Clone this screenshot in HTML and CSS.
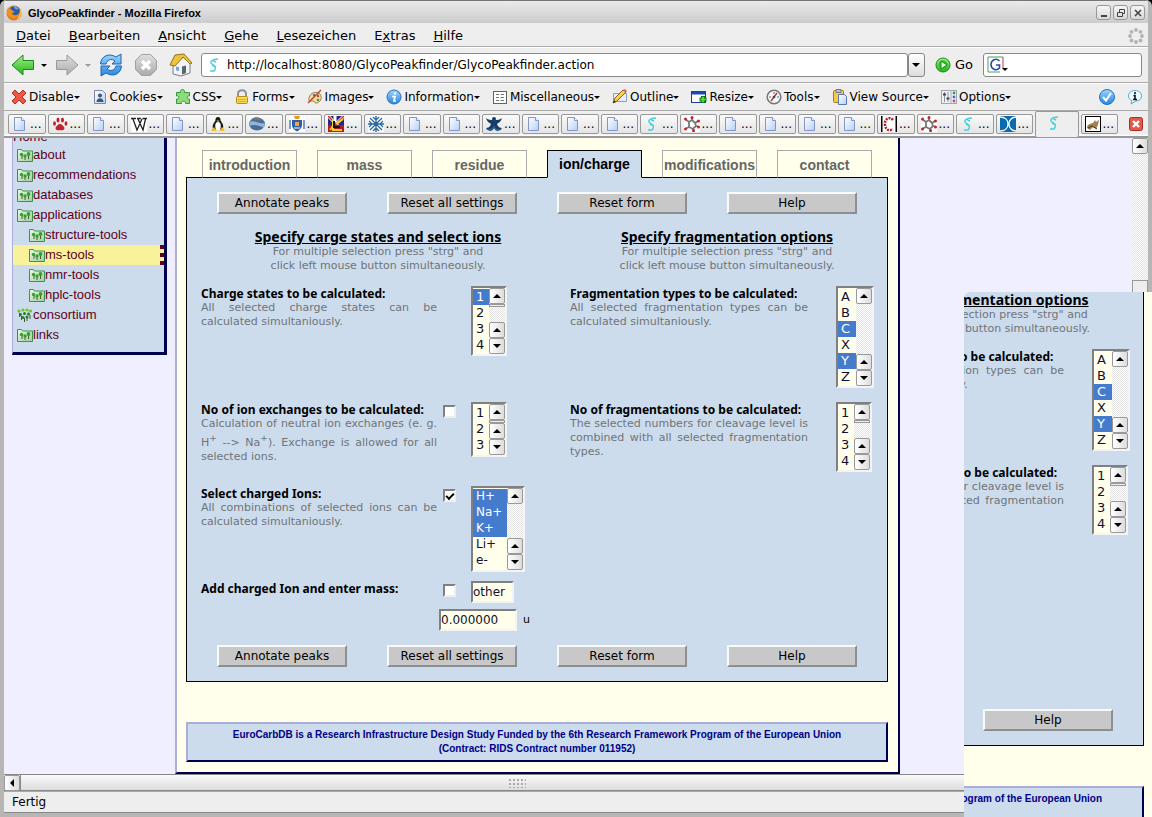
FILE: index.html
```html
<!DOCTYPE html>
<html lang="de">
<head>
<meta charset="utf-8">
<title>GlycoPeakfinder - Mozilla Firefox</title>
<link rel="stylesheet" href="styles.css">
</head>
<body>
<svg class="sprite" aria-hidden="true">
  <defs>
    <linearGradient id="paper" x1="0" y1="0" x2="1" y2="1"><stop offset="0" stop-color="#fff"/><stop offset="1" stop-color="#b4d0f8"/></linearGradient>
    <linearGradient id="green" x1="0" y1="0" x2="0" y2="1"><stop offset="0" stop-color="#a6f08a"/><stop offset="1" stop-color="#22b41c"/></linearGradient>
    <linearGradient id="grey" x1="0" y1="0" x2="0" y2="1"><stop offset="0" stop-color="#e0e0e0"/><stop offset="1" stop-color="#aaa"/></linearGradient>
    <linearGradient id="blue" x1="0" y1="0" x2="0" y2="1"><stop offset="0" stop-color="#9cd6ff"/><stop offset="1" stop-color="#2a84dc"/></linearGradient>
    <linearGradient id="leaf" x1="0" y1="0" x2="1" y2="1"><stop offset="0" stop-color="#eaf8e4"/><stop offset="1" stop-color="#9fd09c"/></linearGradient>
  </defs>
  <symbol id="page" viewBox="0 0 16 16"><path d="M2.500 1.500h7l3 3v10h-10z" fill="url(#paper)" stroke="#8294c8"/><path d="M9.500 1.500v3h3" fill="#fff" stroke="#8294c8"/></symbol>
  <symbol id="paw" viewBox="0 0 16 16"><g fill="#c4202c"><path d="M8 8c2.200 0 3 2 4 3 1.500 2-1 4-4 3-3 1-5.500-1-4-3 1-1 1.800-3 4-3z"/><ellipse cx="2.500" cy="7.500" rx="1.400" ry="2.200"/><ellipse cx="6" cy="4" rx="1.500" ry="2.600"/><ellipse cx="10.500" cy="4" rx="1.500" ry="2.600"/><ellipse cx="14" cy="7.500" rx="1.400" ry="2.200"/></g></symbol>
  <symbol id="wiki" viewBox="0 0 16 16"><rect width="16" height="16" fill="#fff"/><path d="M0 2.500h5M6 2.500h4M11.500 2.500H16M2 3l4 11 5-11M7 3l5 11 2.500-11" fill="none" stroke="#222" stroke-width="1.300"/></symbol>
  <symbol id="tux" viewBox="0 0 16 16"><path d="M8 1c2 0 2.600 1.600 2.600 3.600C12 7 14 9 13 13H3C2 9 4 7 5.400 4.600 5.400 2.600 6 1 8 1z" fill="#1a1a1a"/><ellipse cx="8" cy="10" rx="2.800" ry="4" fill="#fff"/><path d="M6.500 4.500h3L8 6.500z" fill="#f4b20c"/><path d="M1 14.500l3-3.500 3 4zM15 14.500L12 11l-3 4z" fill="#f2b418"/></symbol>
  <symbol id="globe" viewBox="0 0 16 16"><ellipse cx="8" cy="8" rx="8" ry="6.500" fill="#456e9c"/><path d="M.500 6c4-3 10 3 15 1v4C11 11 6 7 .500 10z" fill="#93b6d6"/><path d="M3 3C6 0 11 1 13.500 4c-3 1-6 0-10.500-1z" fill="#75777c"/></symbol>
  <symbol id="crest" viewBox="0 0 16 16"><rect width="16" height="16" fill="#fff"/><path d="M5 0h6l-1 3H6z" fill="#e89a20"/><path d="M3 4h10v5c0 3-2 5-5 6.500C5 14 3 12 3 9z" fill="#2d5ea8"/><path d="M6 6h4v4H6z" fill="#f0a840"/><path d="M1 4v9M15 4v9" stroke="#4272b8" stroke-width="1.400"/><path d="M5 12h6" stroke="#fff"/></symbol>
  <symbol id="flag" viewBox="0 0 16 16"><rect width="16" height="16" fill="#242a80"/><path d="M0 0l16 16M16 0L0 16M7 0v16" stroke="#fff" stroke-width="3"/><path d="M0 0l16 16M16 0L0 16" stroke="#d8202c" stroke-width="1.500"/><path d="M0 9h16v7H0z" fill="#bb161b"/><path d="M5 3v11h9M2 14l3-4M8 8l7-5" stroke="#fdd21c" stroke-width="2" fill="none"/><path d="M6 5v6h6" stroke="#16101c" stroke-width="2" fill="none"/></symbol>
  <symbol id="snow" viewBox="0 0 16 16"><rect width="16" height="16" fill="#fff"/><path d="M8 0v16M0 8h16M2 2l12 12M14 2L2 14M5 1l3 3 3-3M5 15l3-3 3 3M1 5l3 3-3 3M15 5l-3 3 3 3" stroke="#2c669c" stroke-width="1.300" fill="none"/></symbol>
  <symbol id="xman" viewBox="0 0 16 16"><circle cx="8" cy="3" r="2" fill="#173c68"/><path d="M0 2c3 3 13 3 16 0-1 4-4 5-5 6 1 3 3 4 5 4-3 4-7 1-8-2-1 3-5 6-8 2 2 0 4-1 5-4C4 7 1 6 0 2z" fill="#173c68"/><path d="M1 13c3 2 5 2 7-2 2 4 4 4 7 2" fill="none" stroke="#26588c" stroke-width="1.500"/></symbol>
  <symbol id="squiggle" viewBox="0 0 16 16"><path d="M12 2C6 2 3 5 6 7s5 3 2 7H4M10 5L6 3M10 10l-4-2" fill="none" stroke="#46cfdf" stroke-width="1.400"/></symbol>
  <symbol id="molecule" viewBox="0 0 16 16"><rect width="16" height="16" fill="#fff"/><path d="M1 3l4 3 3-2 3 3 3-2M5 6v5l-4 2M5 11l4 2 3-3-1-3M12 10l3 1M9 13l1 3M8 4V1" fill="none" stroke="#777" stroke-width="1.800"/><g fill="#c8242a"><circle cx="1.500" cy="3" r="1.500"/><circle cx="8" cy="1.500" r="1.500"/><circle cx="14.500" cy="5" r="1.500"/><circle cx="1.500" cy="13" r="1.500"/><circle cx="14.500" cy="11" r="1.500"/><circle cx="9.500" cy="14.500" r="1.500"/></g></symbol>
  <symbol id="ring" viewBox="0 0 16 16"><rect width="16" height="16" fill="#fff"/><path d="M.750 0v16M15.250 0v16" stroke="#000" stroke-width="1.500"/><path d="M12 4C9 0 3 3 4 9s5 6 8 4" fill="none" stroke="#b4202c" stroke-width="2.500" stroke-dasharray="2 1"/></symbol>
  <symbol id="bluex" viewBox="0 0 16 16"><rect width="16" height="16" fill="#0a6cb0"/><path d="M0 1c5 0 8 3 8 7s-3 7-8 7M16 1c-4 0-7 3-7 7s3 7 7 7" fill="none" stroke="#fff" stroke-width="1.300"/></symbol>
  <symbol id="cat" viewBox="0 0 16 16"><rect x=".500" y=".500" width="15" height="15" fill="#fff" stroke="#000"/><path d="M2 12c0-4 3-4 6-5l2-3 1 2 3-2-1 5-2 4-3-2-3 3z" fill="#a3814b"/><path d="M3 12l4-2 5 3" stroke="#49351c" fill="none"/></symbol>
  <symbol id="folder" viewBox="0 0 16 14"><path d="M.500 13.500v-12h4l1 1.500h10v10.500z" fill="url(#leaf)" stroke="#3e9245"/><path d="M5 7v4M8 7.500V12M11.500 6v5" stroke="#4a5a38"/><g fill="#31a32a"><circle cx="4.500" cy="6.500" r="1.700"/><circle cx="8" cy="8" r="1.700"/><circle cx="11.500" cy="6" r="1.900"/></g></symbol>
  <symbol id="forest" viewBox="0 0 16 14"><path d="M2.500 5v4M4.500 8v4M7.500 10v4M10 8v5M13 7v4" stroke="#46562f"/><g fill="#6cc81e"><circle cx="2" cy="3" r="1.600"/><circle cx="6" cy="2" r="1.600"/><circle cx="10" cy="2" r="1.600"/><circle cx="13.500" cy="3" r="1.600"/></g><g fill="#237f25"><circle cx="3.500" cy="6.500" r="1.500"/><circle cx="7.500" cy="5.500" r="1.500"/><circle cx="11.500" cy="6" r="1.500"/><circle cx="6" cy="9.500" r="1.500"/><circle cx="10" cy="9" r="1.500"/></g></symbol>
  <symbol id="fox" viewBox="0 0 16 16"><circle cx="8" cy="8" r="7.500" fill="#e0781c"/><circle cx="8.500" cy="6.500" r="5.300" fill="#2b5cac"/><path d="M8 1c3 0 3 2 5 3-3 1-5 0-5-3z" fill="#6aa8e4"/><path d="M1 4c2-1 4 0 6 2l2 1-3 1c1 3 5 3 7 0 0 4-4 6-7 5-4-1-6-5-5-9z" fill="#f3901d"/><path d="M14 4c2 4 1 9-4 11 3-3 4-6 4-11z" fill="#fcd34a"/></symbol>
  <symbol id="back" viewBox="0 0 24 24"><path d="M1 12L12 2v5.500h10.500v9H12V22z" fill="url(#green)" stroke="#168a16" stroke-linejoin="round"/></symbol>
  <symbol id="forward" viewBox="0 0 24 24"><path d="M23 12L12 2v5.500H1.500v9H12V22z" fill="url(#grey)" stroke="#999" stroke-linejoin="round"/></symbol>
  <symbol id="reload" viewBox="0 0 24 24"><path d="M1.500 11C2 3 10-.500 17 4l5-3v10h-9l3-3C12 5 8 7 7 11zM22.500 13c-.500 8-8.500 11.500-15.500 7l-5 3V13h9l-3 3c4 3 8 1 9-3z" fill="url(#blue)" stroke="#1d64b4" stroke-linejoin="round"/></symbol>
  <symbol id="stop" viewBox="0 0 24 24"><path d="M7.500 1.500h9l6 6v9l-6 6h-9l-6-6v-9z" fill="url(#grey)" stroke="#a0a0a0"/><path d="M8 8l8 8M16 8l-8 8" stroke="#fff" stroke-width="3.500"/></symbol>
  <symbol id="home" viewBox="0 0 24 24"><path d="M4 11v10l8 2 9-3V9l-6-5z" fill="#f2f4f8" stroke="#777e8c"/><path d="M1 12L6 2l9-1 8 9-2 1-7-7-8 9z" fill="#efc43a" stroke="#90701c" stroke-linejoin="round"/><path d="M13 21.500v-8l4-1v7.500z" fill="#5b6370"/><path d="M7 13.500v4l3 .500v-4z" fill="#7ca4d8"/></symbol>
  <symbol id="go" viewBox="0 0 16 16"><circle cx="8" cy="8" r="7" fill="url(#green)" stroke="#148a18"/><circle cx="8" cy="8" r="4.700" fill="#39bf2f"/><path d="M6 4l6 4-6 4z" fill="#e8ffe0" stroke="#158c1c"/></symbol>
  <symbol id="cross" viewBox="0 0 16 16"><path d="M4 1l4 4 4-4 3 3-4 4 4 4-3 3-4-4-4 4-3-3 4-4-4-4z" fill="#ee5646" stroke="#c22c1c" stroke-linejoin="round"/></symbol>
  <symbol id="cookie" viewBox="0 0 16 16"><path d="M2.500 1.500h8l3 3v10h-11z" fill="url(#paper)" stroke="#7c88a8"/><circle cx="8" cy="6.500" r="2" fill="#465470"/><path d="M4.500 13c0-5 7-5 7 0z" fill="#465470"/></symbol>
  <symbol id="puzzle" viewBox="0 0 16 16"><path d="M1.500 3.500h4c-1-4 5-4 4 0h5v3.500c-3-1-3 4 0 3v4.500h-4c1-3-5-3-4 0h-5v-4.500c3 1 3-4 0-3z" fill="#8fda7c" stroke="#319a38"/></symbol>
  <symbol id="lock" viewBox="0 0 16 16"><path d="M4 8V5c0-5 8-5 8 0v3" fill="none" stroke="#8c929c" stroke-width="2"/><rect x="2.500" y="7.500" width="11" height="7" rx="1" fill="#f9da54" stroke="#bc8d14"/><path d="M3.500 10.500h9M3.500 12.500h9" stroke="#dcae24"/></symbol>
  <symbol id="palette" viewBox="0 0 16 16"><path d="M2 9C3 3 10 2 13 5c3 4 0 9-4 9-2 0-1-2-3-2s-5 1-4-3z" fill="#f1dca8" stroke="#a28142"/><circle cx="7" cy="6" r="1.200" fill="#3e78cc"/><circle cx="11" cy="7" r="1.200" fill="#d03a30"/><circle cx="11" cy="11" r="1.200" fill="#3a9a3a"/><path d="M1 14L14 1" stroke="#b44a24" stroke-width="1.500"/></symbol>
  <symbol id="info" viewBox="0 0 16 16"><circle cx="8" cy="8" r="7" fill="url(#blue)" stroke="#2a70bc"/><circle cx="9" cy="4.500" r="1.300" fill="#fff"/><path d="M6 7.500h3L8 12h2" fill="none" stroke="#fff" stroke-width="1.700"/></symbol>
  <symbol id="list" viewBox="0 0 16 16"><rect x="1.500" y="2.500" width="13" height="12" fill="#fff" stroke="#5f6268"/><path d="M4 5.500h3M8.500 5.500H12M4 8.500h3M8.500 8.500H12M4 11.500h3M8.500 11.500H12" stroke="#777"/></symbol>
  <symbol id="pencil" viewBox="0 0 16 16"><path d="M1.500 4.500h13v8h-13z" fill="#e4eefa" stroke="#8aa0bc"/><path d="M1 14l2-5 8-8 3 2-9 9z" fill="#f7cf4c" stroke="#8b6420"/><path d="M11 1l2-1 2 2-1 1.500z" fill="#d86868"/><path d="M1 14l1-2.500L4 13z" fill="#222"/></symbol>
  <symbol id="resize" viewBox="0 0 16 16"><rect x=".500" y="2.500" width="14" height="11" fill="#fff" stroke="#1c3a94"/><path d="M1 4h13" stroke="#1c48b4" stroke-width="3"/><path d="M12 7v7M8.500 10.500h7" stroke="#127b18" stroke-width="4"/><path d="M12 8v5M9.500 10.500h5" stroke="#50dc40" stroke-width="2"/></symbol>
  <symbol id="gauge" viewBox="0 0 16 16"><circle cx="8" cy="8" r="6.800" fill="#f5f7fa" stroke="#71757e" stroke-width="1.500"/><path d="M8 3v2M3 8h2M11 8h2" stroke="#666"/><path d="M5 12l3-4 3-4" stroke="#c03020" stroke-width="1.400" fill="none"/><circle cx="8" cy="8" r="1.300" fill="#444"/></symbol>
  <symbol id="clip" viewBox="0 0 16 16"><rect x="1.500" y="1.500" width="10" height="12" rx="1" fill="#f4ca48" stroke="#a67c18"/><path d="M4 .500h5v3H4z" fill="#bbc2cc" stroke="#777"/><path d="M6.500 5.500h6l2 2v8h-8z" fill="url(#paper)" stroke="#5a78b0"/></symbol>
  <symbol id="sliders" viewBox="0 0 16 16"><rect x=".500" y="1.500" width="15" height="13" fill="#eef2f8" stroke="#9ba4b8"/><path d="M3.500 3v10M7 3v10" stroke="#8a909c"/><path d="M2 5.500h3M5.500 9.500h3" stroke="#444" stroke-width="2"/><path d="M10 1v14" stroke="#aab"/><circle cx="13" cy="4" r="1.400" fill="#3c9c3c"/><circle cx="13" cy="8" r="1.400" fill="#3c6cd0"/><circle cx="13" cy="12" r="1.400" fill="#d04848"/></symbol>
  <symbol id="tick" viewBox="0 0 16 16"><circle cx="8" cy="8" r="7.500" fill="url(#blue)" stroke="#1c74cc"/><path d="M4 8l3 3.500L12 4" fill="none" stroke="#fff" stroke-width="2"/></symbol>
  <symbol id="bubble" viewBox="0 0 16 16"><path d="M8 1.500c4 0 6.500 2.500 6.500 5.500S12 12 9 12l-5 3 1-3.500C3 11 1.500 9 1.500 7c0-3 2.500-5.500 6.500-5.500z" fill="#effaff" stroke="#4cb0d8"/><path d="M8 3v2M6.500 6.500H8V10M6 10.500h4" stroke="#111" stroke-width="1.600" fill="none"/></symbol>
  <symbol id="google" viewBox="0 0 18 18"><rect x="1" y="1" width="15" height="15" fill="#fff"/><path d="M1 1h15" stroke="#4aa060"/><path d="M1 1v15h12" stroke="#4aa060" fill="none"/><path d="M16 1v12" stroke="#c83838"/><path d="M12.500 5C9 1.500 4 4 4 8.500S9 15.500 12.500 12V9H9" fill="none" stroke="#2a4aa8" stroke-width="1.600"/></symbol>
  <symbol id="throbber" viewBox="0 0 16 16"><g fill="#b4b4b4"><circle cx="8" cy="2" r="1.900"/><circle cx="12.500" cy="3.800" r="1.900"/><circle cx="14" cy="8" r="1.900"/><circle cx="12.500" cy="12.500" r="1.900"/><circle cx="8" cy="14" r="1.900"/><circle cx="3.500" cy="12.500" r="1.900"/><circle cx="2" cy="8" r="1.900"/><circle cx="3.500" cy="3.800" r="1.900"/></g></symbol>
  <symbol id="closetab" viewBox="0 0 14 14"><rect x=".500" y=".500" width="13" height="13" rx="2" fill="#e0594a" stroke="#a83024"/><path d="M4 4l6 6M10 4l-6 6" stroke="#fff" stroke-width="2.400"/></symbol>
  <symbol id="up" viewBox="0 0 8 8"><path d="M0 6h8L4 2z" fill="#000"/></symbol>
  <symbol id="down" viewBox="0 0 8 8"><path d="M0 2h8L4 6z" fill="#000"/></symbol>
  <symbol id="left" viewBox="0 0 8 8"><path d="M6 0v8L2 4z" fill="#000"/></symbol>
</svg>

<div class="window">
  <header class="titlebar">
    <svg class="i16"><use href="#fox"/></svg>
    <h1>GlycoPeakfinder - Mozilla Firefox</h1>
    <button class="winbtn" aria-label="Minimieren"><svg viewBox="0 0 10 10"><path d="M2 8h6" stroke="#444" stroke-width="2"/></svg></button>
    <button class="winbtn" aria-label="Wiederherstellen"><svg viewBox="0 0 10 10"><path d="M3.500 4V1.500h5v4H7M1.500 4.500h5v4h-5z" fill="none" stroke="#444"/></svg></button>
    <button class="winbtn" aria-label="Schließen"><svg viewBox="0 0 10 10"><path d="M2 2l6 6M8 2L2 8" stroke="#444" stroke-width="1.600"/></svg></button>
  </header>

  <nav class="menubar">
    <button><u>D</u>atei</button><button><u>B</u>earbeiten</button><button><u>A</u>nsicht</button><button><u>G</u>ehe</button><button><u>L</u>esezeichen</button><button>E<u>x</u>tras</button><button><u>H</u>ilfe</button>
    <svg class="i16 push"><use href="#throbber"/></svg>
  </nav>

  <div class="navbar">
    <button class="tool" aria-label="Zurück"><svg class="i24"><use href="#back"/></svg></button>
    <span class="caret"></span>
    <button class="tool" aria-label="Vor"><svg class="i24"><use href="#forward"/></svg></button>
    <span class="caret dim"></span>
    <button class="tool" aria-label="Neu laden"><svg class="i24"><use href="#reload"/></svg></button>
    <button class="tool" aria-label="Stopp"><svg class="i24"><use href="#stop"/></svg></button>
    <button class="tool" aria-label="Startseite"><svg class="i24"><use href="#home"/></svg></button>
    <div class="address">
      <svg class="i16"><use href="#squiggle"/></svg>
      <input type="text" aria-label="Adresse" value="http://localhost:8080/GlycoPeakfinder/GlycoPeakfinder.action">
    </div>
    <button class="drop" aria-label="Verlauf"><span class="caret"></span></button>
    <button class="go"><svg class="i16"><use href="#go"/></svg>Go</button>
    <div class="search">
      <svg class="i18"><use href="#google"/></svg><span class="caret"></span>
      <input type="text" aria-label="Suche">
    </div>
  </div>

  <div class="devbar">
    <button><svg class="i16"><use href="#cross"/></svg>Disable<span class="caret"></span></button>
    <button><svg class="i16"><use href="#cookie"/></svg>Cookies<span class="caret"></span></button>
    <button><svg class="i16"><use href="#puzzle"/></svg>CSS<span class="caret"></span></button>
    <button><svg class="i16"><use href="#lock"/></svg>Forms<span class="caret"></span></button>
    <button><svg class="i16"><use href="#palette"/></svg>Images<span class="caret"></span></button>
    <button><svg class="i16"><use href="#info"/></svg>Information<span class="caret"></span></button>
    <button><svg class="i16"><use href="#list"/></svg>Miscellaneous<span class="caret"></span></button>
    <button><svg class="i16"><use href="#pencil"/></svg>Outline<span class="caret"></span></button>
    <button><svg class="i16"><use href="#resize"/></svg>Resize<span class="caret"></span></button>
    <button><svg class="i16"><use href="#gauge"/></svg>Tools<span class="caret"></span></button>
    <button><svg class="i16"><use href="#clip"/></svg>View Source<span class="caret"></span></button>
    <button><svg class="i16"><use href="#sliders"/></svg>Options<span class="caret"></span></button>
    <svg class="i16 push"><use href="#tick"/></svg>
    <svg class="i16"><use href="#bubble"/></svg>
  </div>

  <div class="tabstrip">
    <button><svg class="i16"><use href="#page"/></svg>...</button>
    <button><svg class="i16"><use href="#paw"/></svg>...</button>
    <button><svg class="i16"><use href="#page"/></svg>...</button>
    <button><svg class="i16"><use href="#wiki"/></svg>...</button>
    <button><svg class="i16"><use href="#page"/></svg>...</button>
    <button><svg class="i16"><use href="#tux"/></svg>...</button>
    <button><svg class="i16"><use href="#globe"/></svg>...</button>
    <button><svg class="i16"><use href="#crest"/></svg>...</button>
    <button><svg class="i16"><use href="#flag"/></svg>...</button>
    <button><svg class="i16"><use href="#snow"/></svg>...</button>
    <button><svg class="i16"><use href="#page"/></svg>...</button>
    <button><svg class="i16"><use href="#page"/></svg>...</button>
    <button><svg class="i16"><use href="#xman"/></svg>...</button>
    <button><svg class="i16"><use href="#page"/></svg>...</button>
    <button><svg class="i16"><use href="#page"/></svg>...</button>
    <button><svg class="i16"><use href="#page"/></svg>...</button>
    <button><svg class="i16"><use href="#squiggle"/></svg>...</button>
    <button><svg class="i16"><use href="#molecule"/></svg>...</button>
    <button><svg class="i16"><use href="#page"/></svg>...</button>
    <button><svg class="i16"><use href="#page"/></svg>...</button>
    <button><svg class="i16"><use href="#page"/></svg>...</button>
    <button><svg class="i16"><use href="#page"/></svg>...</button>
    <button><svg class="i16"><use href="#ring"/></svg>...</button>
    <button><svg class="i16"><use href="#molecule"/></svg>...</button>
    <button><svg class="i16"><use href="#squiggle"/></svg>...</button>
    <button><svg class="i16"><use href="#bluex"/></svg>...</button>
    <button class="current" aria-label="GlycoPeakfinder"><svg class="i16"><use href="#squiggle"/></svg></button>
    <button><svg class="i16"><use href="#cat"/></svg>...</button>
    <svg class="i14"><use href="#closetab"/></svg>
  </div>

  <div class="viewport">
    <div class="document">
      <nav class="sidebar">
        <a class="plain" href="#">Home</a>
        <a href="#"><svg><use href="#folder"/></svg>about</a>
        <a href="#"><svg><use href="#folder"/></svg>recommendations</a>
        <a href="#"><svg><use href="#folder"/></svg>databases</a>
        <a href="#"><svg><use href="#folder"/></svg>applications</a>
        <a class="sub" href="#"><svg><use href="#folder"/></svg>structure-tools</a>
        <a class="sub active" href="#"><svg><use href="#folder"/></svg>ms-tools</a>
        <a class="sub" href="#"><svg><use href="#folder"/></svg>nmr-tools</a>
        <a class="sub" href="#"><svg><use href="#folder"/></svg>hplc-tools</a>
        <a href="#"><svg><use href="#forest"/></svg>consortium</a>
        <a href="#"><svg><use href="#folder"/></svg>links</a>
      </nav>

      <main class="content">
        <nav class="steps">
          <a href="#">introduction</a><a href="#">mass</a><a href="#">residue</a><a class="active" href="#">ion/charge</a><a href="#">modifications</a><a href="#">contact</a>
        </nav>
        <form class="panel">
          <div class="actions">
            <button type="button">Annotate peaks</button><button type="button">Reset all settings</button><button type="button">Reset form</button><button type="button">Help</button>
          </div>
          <div class="columns">
            <section>
              <h2>Specify carge states and select ions</h2>
              <p class="hint">For multiple selection press "strg" and<br>click left mouse button simultaneously.</p>
              <div class="row tall">
                <div class="text"><label for="charge">Charge states to be calculated:</label><p>All selected charge states can be calculated simultaniously.</p></div>
                <span></span>
                <div class="listbox"><select id="charge" multiple size="4"><option selected>1</option><option>2</option><option>3</option><option>4</option></select><span class="scroll"><i><svg><use href="#up"/></svg></i><b></b><em></em><i><svg><use href="#up"/></svg></i><i><svg><use href="#down"/></svg></i></span></div>
              </div>
              <div class="row medium">
                <div class="text"><label for="useexch">No of ion exchanges to be calculated:</label><p>Calculation of neutral ion exchanges (e. g. H<sup>+</sup> --&gt; Na<sup>+</sup>). Exchange is allowed for all selected ions.</p></div>
                <input type="checkbox" id="useexch">
                <div class="listbox"><select aria-label="Ion exchanges" multiple size="3"><option>1</option><option>2</option><option>3</option></select><span class="scroll"><i><svg><use href="#up"/></svg></i><b></b><em></em><i><svg><use href="#up"/></svg></i><i><svg><use href="#down"/></svg></i></span></div>
              </div>
              <div class="row large">
                <div class="text"><label for="useions">Select charged Ions:</label><p>All combinations of selected ions can be calculated simultaniously.</p></div>
                <input type="checkbox" id="useions" checked>
                <div class="listbox wide"><select aria-label="Charged ions" multiple size="5"><option selected>H+</option><option selected>Na+</option><option selected>K+</option><option>Li+</option><option>e-</option></select><span class="scroll"><i><svg><use href="#up"/></svg></i><em></em><i><svg><use href="#up"/></svg></i><i><svg><use href="#down"/></svg></i></span></div>
              </div>
              <div class="row small">
                <div class="text"><label for="useother">Add charged Ion and enter mass:</label></div>
                <input type="checkbox" id="useother">
                <input class="field name" type="text" aria-label="Ion name" value="other">
              </div>
              <div class="mass"><input class="field" type="text" id="mass" value="0.000000"><label for="mass">u</label></div>
            </section>
            <section>
              <h2>Specify fragmentation options</h2>
              <p class="hint">For multiple selection press "strg" and<br>click left mouse button simultaneously.</p>
              <div class="row pair tall">
                <div class="text"><label for="types">Fragmentation types to be calculated:</label><p>All selected fragmentation types can be calculated simultaniously.</p></div>
                <div class="listbox letters"><select id="types" multiple size="6"><option>A</option><option>B</option><option selected>C</option><option>X</option><option selected>Y</option><option>Z</option></select><span class="scroll"><i><svg><use href="#up"/></svg></i><em></em><i><svg><use href="#up"/></svg></i><i><svg><use href="#down"/></svg></i></span></div>
              </div>
              <div class="row pair medium">
                <div class="text"><label for="count">No of fragmentations to be calculated:</label><p>The selected numbers for cleavage level is combined with all selected fragmentation types.</p></div>
                <div class="listbox"><select id="count" multiple size="4"><option>1</option><option>2</option><option>3</option><option>4</option></select><span class="scroll"><i><svg><use href="#up"/></svg></i><b></b><em></em><i><svg><use href="#up"/></svg></i><i><svg><use href="#down"/></svg></i></span></div>
              </div>
            </section>
          </div>
          <div class="actions">
            <button type="button">Annotate peaks</button><button type="button">Reset all settings</button><button type="button">Reset form</button><button type="button">Help</button>
          </div>
        </form>
        <footer class="credit">EuroCarbDB is a Research Infrastructure Design Study Funded by the 6th Research Framework Program of the European Union<br>(Contract: RIDS Contract number 011952)</footer>
      </main>
    </div>
    <div class="vscroll"><i><svg><use href="#up"/></svg></i><em></em><b></b></div>
  </div>

  <div class="hscroll"><i><svg><use href="#left"/></svg></i><b><span class="grip"></span></b></div>
  <footer class="status">Fertig</footer>
</div>

<aside class="fragment">
  <div class="fragment-page">
    <div class="fragment-panel">
      <section>
        <h2>Specify fragmentation options</h2>
        <p class="hint">For multiple selection press "strg" and<br>click left mouse button simultaneously.</p>
        <div class="row pair tall">
          <div class="text"><label for="types2">Fragmentation types to be calculated:</label><p>All selected fragmentation types can be calculated simultaniously.</p></div>
          <div class="listbox letters"><select id="types2" multiple size="6"><option>A</option><option>B</option><option selected>C</option><option>X</option><option selected>Y</option><option>Z</option></select><span class="scroll"><i><svg><use href="#up"/></svg></i><em></em><i><svg><use href="#up"/></svg></i><i><svg><use href="#down"/></svg></i></span></div>
        </div>
        <div class="row pair medium">
          <div class="text"><label for="count2">No of fragmentations to be calculated:</label><p>The selected numbers for cleavage level is combined with all selected fragmentation types.</p></div>
          <div class="listbox"><select id="count2" multiple size="4"><option>1</option><option>2</option><option>3</option><option>4</option></select><span class="scroll"><i><svg><use href="#up"/></svg></i><b></b><em></em><i><svg><use href="#up"/></svg></i><i><svg><use href="#down"/></svg></i></span></div>
        </div>
      </section>
      <div class="actions single"><button type="button">Help</button></div>
    </div>
    <div class="credit">Program of the European Union</div>
  </div>
</aside>
</body>
</html>
```
FILE: styles.css
```css
* { box-sizing: border-box; }
body { margin: 0; background: #000; font: 12px/16px "DejaVu Sans", sans-serif; color: #000; }
h1, h2, p { margin: 0; }
button { font: inherit; color: inherit; background: none; border: 0; padding: 0; margin: 0; }
input, select { font: inherit; margin: 0; }
svg { display: block; flex: none; }
.sprite { position: absolute; width: 0; height: 0; }
.i14 { width: 14px; height: 14px; }
.i16 { width: 16px; height: 16px; }
.i18 { width: 18px; height: 18px; }
.i24 { width: 24px; height: 24px; }
.push { margin-left: auto; }
.caret { flex: none; width: 0; border: 3px solid transparent; border-top-color: #000; border-bottom: 0; }
.dim { border-top-color: #999; }

/* browser window */
.window { height: 100vh; display: flex; flex-direction: column; overflow: hidden; background: #eee; border: solid #b8b6b4; border-width: 0 4px 4px; border-radius: 6px 6px 0 0; }
.titlebar { flex: none; height: 23px; display: flex; align-items: center; gap: 2px; padding: 1px 3px 0 2px; background: linear-gradient(#eaeaea, #ccc); border-top: 1px solid #777; }
.titlebar h1 { flex: 1; padding-left: 4px; font: bold 11px/16px "Liberation Sans", sans-serif; }
.winbtn { display: grid; place-items: center; width: 15px; height: 15px; border: 1px solid #999; border-radius: 3px; background: linear-gradient(#f6f6f6, #d8d8d8); }
.winbtn svg { width: 10px; height: 10px; }
.menubar { flex: none; height: 24px; display: flex; align-items: center; gap: 18px; padding: 2px 4px 0 12px; border-bottom: 1px solid #aaa; font-size: 13px; }
.navbar { flex: none; height: 36px; display: flex; align-items: center; padding: 0 6px 0 7px; border-top: 1px solid #fff; border-bottom: 1px solid #aaa; }
.navbar .tool { margin-right: 6px; }
.navbar .caret { margin-right: 8px; }
.navbar .tool + .tool { margin-left: 5px; }
.address, .search { display: flex; align-items: center; height: 24px; background: #fff; border: 1px solid #888; border-radius: 3px; }
.address { flex: 1; margin-left: 2px; padding-left: 4px; gap: 5px; }
.address input, .search input { flex: 1; min-width: 0; padding: 0; border: 0; outline: 0; background: none; }
.drop { display: grid; place-items: center; width: 17px; height: 24px; border: 1px solid #888; border-radius: 3px; background: linear-gradient(#fff, #ddd); }
.navbar .drop .caret { margin: 0; border-width: 4px 4px 0; }
.go { display: flex; align-items: center; gap: 4px; padding: 0 10px; font-size: 13px; }
.search { width: 159px; padding-left: 3px; }
.search .caret { align-self: flex-end; margin: 0 0 5px -3px; }
.devbar { flex: none; height: 28px; display: flex; align-items: center; gap: 12px; padding: 0 5px 0 7px; border-top: 1px solid #fff; border-bottom: 1px solid #aaa; }
.devbar button { display: flex; align-items: center; gap: 2px; white-space: nowrap; }
.devbar button .caret { margin-left: -2px; }
.tabstrip { flex: none; height: 27px; display: flex; align-items: flex-end; gap: 2px; padding: 0 5px 2px 4px; border-bottom: 2px solid #999; background: linear-gradient(#eee 90%, #fff); }
.tabstrip button { flex: 1; min-width: 0; height: 20px; display: flex; align-items: center; justify-content: center; gap: 2px; border: 1px solid #999; border-radius: 2px; background: linear-gradient(#fafafa, #e4e4e4); }
.tabstrip .current { align-self: stretch; height: auto; margin-bottom: -3px; padding: 0 6px 3px 0; border-bottom: 0; background: #eee; }
.tabstrip > svg { margin: 0 0 3px 9px; }

/* scrolling area */
.viewport { flex: 1; min-height: 0; display: flex; overflow: hidden; }
.document { flex: 1; min-width: 0; display: flex; align-items: flex-start; background: #f0efff; }
.vscroll, .scroll { display: flex; flex-direction: column; width: 16px; background: repeating-conic-gradient(#e2e2e2 0 25%, #fff 0 50%) 0 0 / 2px 2px; }
.vscroll em { height: 126px; }
.vscroll b { flex: 1; border: 1px solid #999; background: #eee; }
.vscroll i, .scroll i, .hscroll i { flex: none; display: grid; place-items: center; width: 16px; height: 16px; border: 1px solid #999; border-radius: 2px; background: linear-gradient(90deg, #fff, #ddd); }
.vscroll svg, .scroll svg, .hscroll svg { width: 8px; height: 8px; }
.scroll em { flex: 1; }
.scroll b { height: 3px; border: 1px solid #999; background: #eee; }
.hscroll { flex: none; display: flex; height: 17px; border-top: 1px solid #888; border-bottom: 1px solid #888; }
.hscroll b { flex: 1; display: grid; place-items: center; border-left: 1px solid #888; background: linear-gradient(#fafafa, #ddd); }
.grip { width: 18px; height: 10px; margin-left: -136px; background: radial-gradient(#aaa 1px, transparent 1px) 0 0 / 4px 4px; }
.status { flex: none; height: 22px; padding: 2px 8px; border-top: 1px solid #aaa; border-bottom: 1px solid #888; }

/* site navigation */
.sidebar { flex: none; width: 155px; margin: -13px 8px 0; padding-bottom: 7px; border: solid #000050; border-width: 0 3px 3px 0; border-left: 1px solid #a9afd9; background: #ccdcec; }
.sidebar a { display: flex; align-items: center; height: 20px; padding-left: 4px; font: 13px/20px "Liberation Sans", sans-serif; color: #600020; text-decoration: none; }
.sidebar svg { width: 16px; height: 14px; }
.sidebar .plain { padding: 4px 0 0; }
.sidebar .sub { padding-left: 16px; }
.sidebar .active { background: repeating-linear-gradient(#600020 0 4px, #faf29a 4px 8px) right / 4px 100% no-repeat #faf29a; }

/* page */
.content { flex: 1; align-self: stretch; margin-right: 232px; padding: 12px 10px 0 9px; background: #ffffec; border: solid #000050; border-width: 0 2px 2px 0; border-left: 2px solid #a9afd9; }
.steps { display: grid; grid-template-columns: repeat(6, 1fr); gap: 20px; margin-bottom: -1px; padding: 0 16px; }
.steps a { height: 28px; border: 1px solid #aaa; border-bottom-color: #000; text-align: center; font: bold 14px/28px "Liberation Sans", sans-serif; color: #666; text-decoration: none; }
.steps .active { border-color: #000; border-bottom-color: #ccdcec; background: #ccdcec; color: #000; line-height: 26px; z-index: 1; }
.panel { padding: 14px 0; background: #ccdcec; border: 1px solid #000; }
.actions { display: grid; grid-template-columns: repeat(4, 1fr); gap: 40px; padding: 0 30px; }
.actions button { height: 22px; background: #c8c8c8; border: 2px solid; border-color: #fafafa #8c9094 #8c9094 #fafafa; }
.columns { display: grid; grid-template-columns: 354fr 314fr; gap: 15px; padding: 15px 3px 14px 14px; }
h2 { font: bold 14px/16px "Noto Sans", "DejaVu Sans", sans-serif; text-align: center; text-decoration: underline; white-space: nowrap; }
.hint { margin-bottom: 13px; font-size: 11px; line-height: 14px; text-align: center; color: #707478; }
.row { display: grid; grid-template-columns: 236px 22px auto; gap: 6px; align-items: start; justify-content: start; }
.pair { grid-template-columns: 238px auto; gap: 28px; }
.tall { height: 116px; }
.medium { height: 84px; }
.large { height: 95px; }
.small { height: 28px; }
.text { padding-top: 1px; font-size: 11px; line-height: 14px; }
.text label { display: block; font: bold 12px/14px "Noto Sans", "DejaVu Sans", sans-serif; white-space: nowrap; }
.text p { color: #707478; text-align: justify; }
.text sup { font-size: 9px; }
.row input[type="checkbox"] { appearance: none; width: 13px; height: 13px; margin-top: 3px; background: #fff; border: 2px solid; border-color: #808080 #eee #eee #808080; }
.row input[type="checkbox"]:checked::before { content: ""; display: block; width: 6px; height: 3px; margin: 2px 1px; border: solid #000; border-width: 0 0 2px 2px; rotate: -45deg; }
.listbox { display: flex; border: 2px solid; border-color: #808080 #f4f4f4 #f4f4f4 #808080; background: #ffffec; font-size: 13px; }
.listbox select { appearance: none; display: block; width: 16px; height: auto; margin: 1px 0; padding: 0; border: 0; border-radius: 0; outline: 0; overflow: hidden; background: #ffffec; scrollbar-width: none; }
.listbox.letters select { width: 18px; }
.listbox.wide select { width: 34px; }
.listbox option { height: 16px; min-height: 16px; padding: 0 0 0 3px; line-height: 16px; color: #101030; }
.listbox option:checked { background: linear-gradient(#447bcd, #447bcd); -webkit-text-fill-color: #fff; }
.listbox.wide { font-size: 12px; }
.field { width: 78px; height: 22px; padding: 0; background: #ffffec; border: 2px solid; border-color: #808080 #f4f4f4 #f4f4f4 #808080; color: #101030; }
.field.name { width: 43px; }
.mass { display: flex; align-items: center; gap: 6px; padding-left: 238px; }
.mass label { font-size: 11px; }
.credit { min-height: 40px; margin: 40px 0 10px; padding: 4px; border: solid #000050; border-width: 2px; border-top-color: #a9afd9; border-left-color: #a9afd9; background: #ccdcec; text-align: center; font: bold 10px/14px "Liberation Sans", sans-serif; color: #000088; }

/* loose page fragment lying over the lower right of the window */
.fragment { position: absolute; top: 292px; right: 0; bottom: 0; width: 188px; display: flex; justify-content: flex-end; overflow: hidden; border-top-left-radius: 6px; background: #ffffec; }
.fragment-page { flex: none; width: 327px; padding-right: 8px; }
.fragment-panel { padding: 0 4px 14px 1px; background: #ccdcec; border: solid #000; border-width: 0 1px 1px 0; }
.fragment .medium { height: 244px; }
.fragment .single { grid-template-columns: 130px; justify-content: end; padding: 0 26px 0 0; }
.fragment .credit { padding-right: 40px; text-align: right; }
```
